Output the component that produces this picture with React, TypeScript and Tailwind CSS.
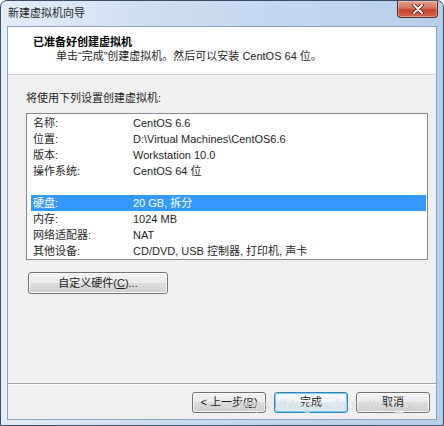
import React from "react";

const font = { fontFamily: '"Liberation Sans", "Noto Sans CJK SC", sans-serif' };

function WinButton({ children, focused = false, className = "" }: { children: React.ReactNode; focused?: boolean; className?: string }) {
  return (
    <div
      className={
        "relative flex items-center justify-center rounded-[3px] border text-[11px] text-[#1a1a1a] " +
        (focused
          ? "border-[#3c7fb1] bg-[linear-gradient(#f4f9fd_0%,#eef6fc_50%,#e2f1fb_50%,#d6ebf8_100%)] shadow-[inset_0_0_0_1px_#6fd3f5]"
          : "border-[#707070] bg-[linear-gradient(#f2f2f2_0%,#ebebeb_50%,#dddddd_50%,#cfcfcf_100%)] shadow-[inset_0_0_0_1px_#fcfcfc]") +
        " " +
        className
      }
    >
      {children}
    </div>
  );
}

const rows: [string, string][] = [
  ["名称:", "CentOS 6.6"],
  ["位置:", "D:\\Virtual Machines\\CentOS6.6"],
  ["版本:", "Workstation 10.0"],
  ["操作系统:", "CentOS 64 位"],
  ["", ""],
  ["硬盘:", "20 GB, 拆分"],
  ["内存:", "1024 MB"],
  ["网络适配器:", "NAT"],
  ["其他设备:", "CD/DVD, USB 控制器, 打印机, 声卡"],
];

export default function App() {
  return (
    <div
      style={font}
      className="relative w-[444px] h-[426px] overflow-hidden rounded-t-[7px] border border-[#3b4e68] bg-[linear-gradient(90deg,#e3edf8_0%,#cadcf1_40%,#b6cfeb_100%)] flex flex-col"
    >
      {/* Title bar */}
      <div className="h-[25px] flex items-start justify-between pl-[7px] pr-[5px] shrink-0">
        <span className="mt-[5px] text-[11px] leading-[14px] text-[#1e1e1e]">新建虚拟机向导</span>
        <div className="w-[41px] h-[17px] rounded-b-[4px] border border-t-0 border-[#5a2a22] bg-[linear-gradient(#e9a08e_0%,#d4705a_45%,#c4412a_55%,#d8664c_100%)] flex items-center justify-center shadow-[inset_0_0_0_1px_rgba(255,255,255,0.35)]">
          <svg width="12" height="10" viewBox="0 0 12 10">
            <path d="M2 1 L10 9 M10 1 L2 9" stroke="#4a1a12" strokeWidth="3.6" strokeLinecap="round" />
            <path d="M2 1 L10 9 M10 1 L2 9" stroke="#ffffff" strokeWidth="2" strokeLinecap="round" />
          </svg>
        </div>
      </div>

      {/* Client area */}
      <div className="mx-[6px] flex-1 flex flex-col border border-[#8aa2c0] bg-[#f0f0f0]">
        {/* Header */}
        <div className="h-[48px] shrink-0 bg-white border-b border-[#d5d5d5] flex flex-col pt-[8px]">
          <div className="pl-[25px] text-[11px] leading-[14px] font-bold text-black">已准备好创建虚拟机</div>
          <div className="pl-[48px] text-[11px] leading-[14px] text-[#1e1e1e]">单击“完成”创建虚拟机。然后可以安装 CentOS 64 位。</div>
        </div>

        {/* Body */}
        <div className="flex-1 flex flex-col">
          <div className="pl-[18px] pt-[16px] text-[11px] leading-[14px] text-[#1e1e1e]">将使用下列设置创建虚拟机:</div>
          <div className="ml-[18px] mt-[8px] w-[402px] h-[147px] border border-[#828790] bg-white pl-[4px] pr-[1px] pt-[1px]">
            {rows.map(([k, v], i) => {
              const sel = i === 5;
              return (
                <div
                  key={i}
                  className={
                    "h-[16px] flex items-center text-[11px] leading-[14px] pl-[2px] " +
                    (sel ? "bg-[#3399ff] text-white" : "text-[#1e1e1e]")
                  }
                >
                  <span className="w-[100px]">{k}</span>
                  <span>{v}</span>
                </div>
              );
            })}
          </div>
          <WinButton className="ml-[20px] mt-[12px] w-[140px] h-[22px]">
            <span>
              自定义硬件(<span className="underline">C</span>)...
            </span>
          </WinButton>
        </div>

        {/* Footer */}
        <div className="h-[36px] shrink-0 border-t border-[#a0a0a0] shadow-[inset_0_1px_0_#ffffff] flex items-start justify-end gap-[8px] pr-[6px] pt-[8px]">
          <WinButton className="w-[74px] h-[21px]">
            <span>
              &lt; 上一步(<span className="underline">B</span>)
            </span>
          </WinButton>
          <WinButton focused className="w-[74px] h-[21px]">
            <span>完成</span>
          </WinButton>
          <WinButton className="w-[74px] h-[21px]">
            <span>取消</span>
          </WinButton>
        </div>
      </div>

      {/* bottom frame */}
      <div className="h-[5px] shrink-0" />

      {/* watermark */}
      <div className="absolute left-[237px] top-[396px] text-[15px] leading-[16px] text-white/60 [text-shadow:0_0_1px_rgba(120,120,120,0.4)] pointer-events-none" style={{ fontFamily: '"Liberation Sans", sans-serif' }}>
        https://blog.csdn.net/Ah_xx
      </div>
    </div>
  );
}
